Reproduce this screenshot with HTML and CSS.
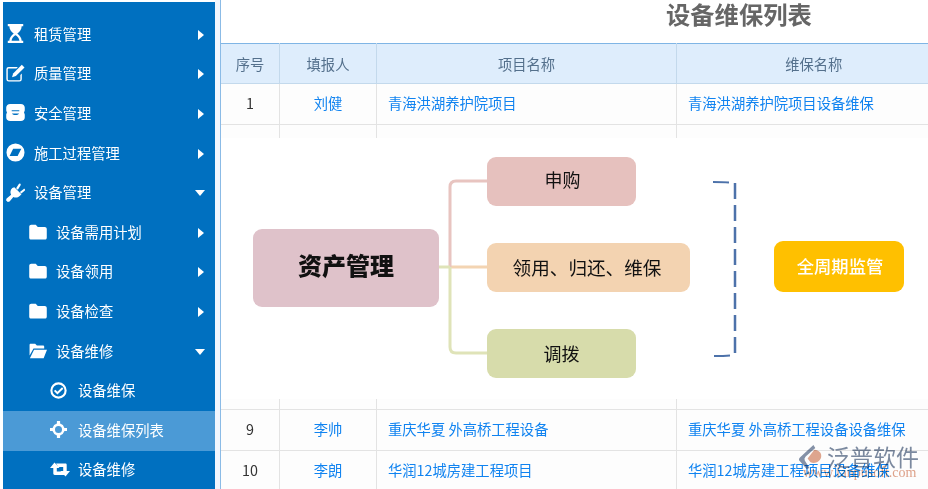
FILE: index.html
```html
<!DOCTYPE html>
<html lang="zh-CN">
<head>
  <meta charset="UTF-8" />
  <title>设备维保列表</title>
  <link rel="stylesheet" href="styles.css">
</head>
<body>

<div class="page">
  <div class="sidebar">
    <ul class="menu">
      <li class="item"><svg class="icon" viewBox="0 0 16 16"><path fill-rule="evenodd" d="M1.500 0h13v1.800h-1.300c0 2.700-1.800 4.700-3.700 6.200 1.900 1.500 3.700 3.500 3.700 6.200h1.300V16h-13v-1.800h1.300c0-2.700 1.800-4.700 3.700-6.200C4.600 6.500 2.800 4.500 2.800 1.800H1.500zM8 9.300c-1.800 1.300-3.100 2.900-3.300 4.900h6.600c-.2-2-1.500-3.600-3.300-4.900z"/></svg><span class="label">租赁管理</span><i class="arrow"></i></li>
      <li class="item"><svg class="icon" viewBox="0 0 16 16"><path d="M2.300 2.500H10L8.800 3.700H2.300a.8.800 0 0 0-.8.800v8.300a.8.800 0 0 0 .8.800h9a.8.800 0 0 0 .8-.8V9.300l1.200-1.200v4.700a2 2 0 0 1-2 2h-9a2 2 0 0 1-2-2V4.500a2 2 0 0 1 2-2z"/><path d="M13.300.6l2.300 2.300-7.300 7.300-3.200.9.900-3.200z"/></svg><span class="label">质量管理</span><i class="arrow"></i></li>
      <li class="item"><svg class="icon" viewBox="0 0 16 16"><path fill-rule="evenodd" d="M3.500.8h9c1.900 0 3.300 1.300 3.300 3v2.400c0 .9-.6 1.300-.6 1.800s.6.900.6 1.800v2.400c0 1.700-1.400 3-3.300 3h-9c-1.900 0-3.300-1.300-3.300-3V9.800c0-.9.600-1.300.6-1.800S.2 7.100.2 6.200V3.800C.2 2.100 1.600.8 3.500.8zM4.800 6v1h6.400V6zm.2 2.800c.6 1 1.600 1.300 3 1.300s2.400-.3 3-1.300z"/></svg><span class="label">安全管理</span><i class="arrow"></i></li>
      <li class="item"><svg class="icon" viewBox="0 0 16 16"><path fill-rule="evenodd" d="M8 .4a7.600 7.600 0 1 1 0 15.200A7.600 7.600 0 0 1 8 .4zM6 4.900L3 11h6.800c.9-1.800 2-4.200 3.200-6.100z"/></svg><span class="label">施工过程管理</span><i class="arrow"></i></li>
      <li class="item"><svg class="icon" viewBox="0 0 16 16"><path d="M7 3.500l6 6-1.200 1.200c-1.700 1.700-4 2-5.600 1L3 15.500 1.500 16 0 14.500l.5-1.500 3.800-3.200c-1-1.600-.7-3.900 1-5.600z"/><path d="M8.500 4.500L10.800.8c.3-.5.900-.6 1.300-.2s.4.900.2 1.300L10 5.700zM11.700 7.600l3-2.400c.5-.4 1-.3 1.200.1s.2.900-.2 1.200l-2.800 2.400z"/></svg><span class="label">设备管理</span><i class="caret"></i></li>
      <li class="item sub"><svg class="icon" viewBox="0 0 16 16"><use href="#folder"/></svg><span class="label">设备需用计划</span><i class="arrow"></i></li>
      <li class="item sub"><svg class="icon" viewBox="0 0 16 16"><use href="#folder"/></svg><span class="label">设备领用</span><i class="arrow"></i></li>
      <li class="item sub"><svg class="icon" viewBox="0 0 16 16"><use href="#folder"/></svg><span class="label">设备检查</span><i class="arrow"></i></li>
      <li class="item sub"><svg class="icon" viewBox="0 0 16 16"><path d="M1.500 1.500h4L7 3h5.500c.5 0 1 .4 1 1v1.800H4L.5 12V2.500c0-.6.4-1 1-1zM4.500 6.800H16l-3 7.700H.8z"/></svg><span class="label">设备维修</span><i class="caret"></i></li>
      <li class="item leaf"><svg class="icon" viewBox="0 0 16 16"><path fill-rule="evenodd" d="M8 .3a7.700 7.700 0 1 1 0 15.400A7.700 7.700 0 0 1 8 .3zm0 2a5.700 5.700 0 1 0 0 11.400A5.700 5.700 0 0 0 8 2.300zm3.300 2.700l1.300 1.300L7 11.800 3.700 8.500 5 7.200l2 2z"/></svg><span class="label">设备维保</span></li>
      <li class="item leaf active"><svg class="icon" viewBox="0 0 16 16"><path fill-rule="evenodd" d="M6.500 0h3v2.400a6 6 0 0 1 4.100 4.100H16v3h-2.400a6 6 0 0 1-4.100 4.100V16h-3v-2.400a6 6 0 0 1-4.100-4.100H0v-3h2.400a6 6 0 0 1 4.100-4.100zM8 4.700a3.300 3.300 0 1 0 0 6.600 3.300 3.300 0 0 0 0-6.600z"/></svg><span class="label">设备维保列表</span></li>
      <li class="item leaf"><svg class="icon wide" viewBox="0 0 20 16"><path d="M4.500 1L9.500 6.500H6.800V10H12.500l2.500 3.500H4.700c-.9 0-1.400-.5-1.400-1.400V6.500H0zM6 2H15.300c.9 0 1.400.5 1.400 1.400V9.500H20L15.500 15 10.500 9.500h2.700V5.500H8.500z"/></svg><span class="label">设备维修</span></li>
    </ul>
  </div>

  <div class="main">
    <h1 class="title">设备维保列表</h1>
    <table class="grid">
      <colgroup>
        <col class="col-no"><col class="col-user"><col class="col-project"><col class="col-name">
      </colgroup>
      <thead>
        <tr><th>序号</th><th>填报人</th><th>项目名称</th><th>维保名称</th></tr>
      </thead>
      <tbody>
        <tr><td>1</td><td><a>刘健</a></td><td><a>青海洪湖养护院项目</a></td><td><a>青海洪湖养护院项目设备维保</a></td></tr>
        <tr class="covered"><td>2</td><td><a>刘健</a></td><td></td><td></td></tr>
        <tr class="gap"><td></td><td></td><td></td><td></td></tr>
        <tr><td>9</td><td><a>李帅</a></td><td><a>重庆华夏 外高桥工程设备</a></td><td><a>重庆华夏 外高桥工程设备设备维保</a></td></tr>
        <tr><td>10</td><td><a>李朗</a></td><td><a>华润12城房建工程项目</a></td><td><a>华润12城房建工程项目设备维保</a></td></tr>
      </tbody>
    </table>

    <div class="chart">
      <svg class="links" viewBox="0 0 707 261">
        <path class="link-b" d="M229 129h37"/>
        <path class="link-a" d="M229 129V49q0-6 6-6h31"/>
        <path class="link-c" d="M229 129v80q0 6 6 6h31"/>
        <path class="link-c" d="M217 129h12"/>
        <path class="tick" d="M492 44c5 0 10 0 16 .5M493 218c5 0 10 0 16-.5"/>
        <path class="bracket" d="M514 45v171"/>
      </svg>
      <div class="node root">资产管理</div>
      <div class="node buy">申购</div>
      <div class="node use">领用、归还、维保</div>
      <div class="node move">调拨</div>
      <div class="node watch">全周期监管</div>
    </div>

    <div class="mark">
      <svg class="mark-icon" viewBox="0 0 26 26"><path fill="#8592a8" d="M16 0L2 13q-2 2 0 4l7 8 3-1-5-8q-1-2 1-4L18 3z"/><path fill="#e0a68f" d="M17 5c5 0 8 4 7 8s-6 7-11 5l-3-4z"/></svg>
      <div class="mark-text">泛普软件</div>
      <div class="mark-url">www.fanpusoft.com</div>
    </div>
  </div>
</div>

<svg class="defs" width="0" height="0"><defs><path id="folder" d="M2 1.500h4L7.800 3.500H14c1 0 1.800.8 1.800 1.800V13c0 1-.8 1.700-1.800 1.700H2c-1 0-1.800-.7-1.800-1.700V3.300C.2 2.300 1 1.500 2 1.500z"/></defs></svg>

</body>
</html>
```

FILE: styles.css
```css
html, body {
  margin: 0;
  height: 100%;
  overflow: hidden;
  background: #fff;
  font-family: "Noto Sans CJK SC", "Liberation Sans", sans-serif;
}
.page {
  display: flex;
  height: 489px;
  padding-left: 3px;
  box-sizing: border-box;
}
.sidebar {
  width: 212px;
  flex: none;
  margin-top: 2px;
  padding-top: 13px;
  box-sizing: border-box;
  background: #0070c0;
}
.menu {
  list-style: none;
  margin: 0;
  padding: 0;
}
.item {
  display: flex;
  align-items: center;
  height: 39.6px;
  padding-left: 3px;
  padding-right: 10px;
  color: #fff;
  font-size: 14.3px;
}
.item.sub {
  padding-left: 26px;
}
.item.leaf {
  padding-left: 47px;
}
.item.active {
  background: #4b9ad6;
}
.icon {
  width: 19px;
  height: 19px;
  flex: none;
  fill: #fff;
  margin-right: 9px;
  margin-bottom: 2px;
}
.item.sub .icon {
  width: 18px;
  height: 18px;
}
.item.leaf .icon {
  width: 17px;
  height: 17px;
  margin-right: 11px;
}
.item.leaf .icon.wide {
  width: 20px;
  margin-right: 8px;
}
.label {
  flex: 1;
  padding-bottom: 3px;
}
.arrow {
  width: 0;
  height: 0;
  border-left: 6px solid #fff;
  border-top: 5px solid transparent;
  border-bottom: 5px solid transparent;
  margin-right: 1px;
}
.caret {
  width: 0;
  height: 0;
  border-top: 6px solid #fff;
  border-left: 5px solid transparent;
  border-right: 5px solid transparent;
}
.main {
  flex: 1;
  position: relative;
  min-width: 0;
  overflow: hidden;
  margin-left: 5px;
  border-left: 1px solid #8bbbe6;
  box-shadow: -5px 0 0 #f1f6fe;
}
.title {
  height: 43px;
  margin: 0;
  padding-left: 445px;
  box-sizing: border-box;
  font-size: 24.3px;
  line-height: 28px;
  font-weight: 700;
  color: #666;
}
.grid {
  width: 730px;
  table-layout: fixed;
  border-collapse: collapse;
  font-size: 14.3px;
  color: #333;
}
.col-no { width: 58.5px; }
.col-user { width: 97px; }
.col-project { width: 300px; }
.col-name { width: 274.5px; }
th {
  height: 38px;
  padding: 0 0 1px;
  background: #deedfc;
  border-top: 1px solid #7fb5e5;
  border-right: 1px solid #c3d9ec;
  border-bottom: 1px solid #c3d9ec;
  font-weight: 400;
  color: #54708c;
}
td {
  height: 36px;
  padding: 0 0 4px;
  text-align: center;
  border-right: 1px solid #e3e3e3;
  border-bottom: 1px solid #e3e3e3;
  background: #fdfdfd;
}
td:nth-child(n+3) {
  text-align: left;
  padding-left: 11px;
}
tr.covered td {
  padding: 3px 0 1px;
}
tr.gap td {
  height: 239px;
}
td a {
  color: #1083f0;
}
.chart {
  position: absolute;
  left: 0;
  top: 138px;
  width: 707px;
  height: 261px;
  background: #fff;
}
.links {
  position: absolute;
  left: 0;
  top: 0;
  width: 707px;
  height: 261px;
  fill: none;
  stroke-width: 3;
}
.link-a { stroke: #e8c4c0; }
.link-b { stroke: #f3d4b2; }
.link-c { stroke: #dfe3b8; }
.tick {
  stroke: #4d72aa;
  stroke-width: 2;
}
.bracket {
  stroke: #4d72aa;
  stroke-width: 2.500;
  stroke-dasharray: 16 6;
}
.node {
  position: absolute;
  display: flex;
  align-items: center;
  justify-content: center;
  box-sizing: border-box;
  border-radius: 9px;
  color: #111;
  font-size: 18px;
  padding-bottom: 2px;
}
.root {
  left: 32px;
  top: 91px;
  width: 186px;
  height: 78px;
  padding-bottom: 8px;
  background: #dfc2ca;
  font-size: 24px;
  font-weight: 900;
}
.buy {
  left: 266px;
  top: 19px;
  width: 149px;
  height: 49px;
  padding-bottom: 5px;
  padding-left: 2px;
  background: #e6c1be;
}
.use {
  left: 266px;
  top: 105px;
  width: 203px;
  height: 49px;
  padding-right: 3px;
  background: #f3d3b1;
  font-size: 18.600px;
}
.move {
  left: 266px;
  top: 191px;
  width: 149px;
  height: 49px;
  background: #d7dcab;
}
.watch {
  left: 553px;
  top: 103px;
  width: 130px;
  height: 51px;
  padding-left: 2px;
  background: #ffc000;
  color: #fff;
  font-size: 17.300px;
  font-weight: 500;
}
.mark {
  position: absolute;
  left: 577px;
  top: 443px;
  width: 130px;
  height: 46px;
  mix-blend-mode: multiply;
}
.mark-icon {
  position: absolute;
  left: 0;
  top: 2px;
  width: 25px;
  height: 25px;
}
.mark-text {
  position: absolute;
  left: 29px;
  top: 0;
  font-size: 23px;
  line-height: 26px;
  color: #7c8aa0;
  white-space: nowrap;
}
.mark-url {
  position: absolute;
  left: 5px;
  top: 22px;
  font-family: "Liberation Serif", serif;
  font-size: 14px;
  line-height: 15px;
  color: #e0a48c;
  white-space: nowrap;
}
.defs {
  position: absolute;
}
```
